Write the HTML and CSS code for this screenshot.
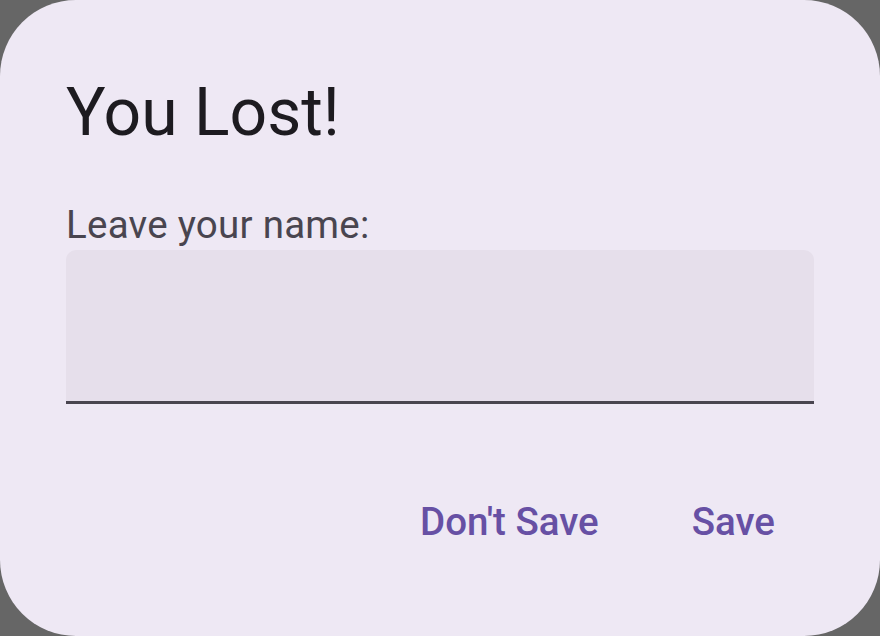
FILE: index.html
```html
<!DOCTYPE html>
<html>
<head>
<meta charset="utf-8">
<link rel="stylesheet" href="styles.css">
</head>
<body>
<div class="dialog">
  <h1 class="title">You Lost!</h1>
  <p class="label">Leave your name:</p>
  <div class="field"></div>
  <div class="actions">
    <button class="btn">Don't Save</button>
    <button class="btn">Save</button>
  </div>
</div>
</body>
</html>
```
FILE: styles.css
```css
html, body {
  margin: 0;
  padding: 0;
  background: #666666;
}
.dialog {
  box-sizing: border-box;
  width: 880px;
  height: 636px;
  background: #EEE8F4;
  border-radius: 76px;
  padding: 69px 66px 0 66px;
  font-family: Roboto, "Liberation Sans", sans-serif;
  display: flex;
  flex-direction: column;
}
.title {
  margin: 0;
  font-size: 66px;
  font-weight: 400;
  line-height: 88px;
  color: #1D1B20;
}
.label {
  margin: 42px 0 0 0;
  font-size: 38.5px;
  line-height: 52px;
  letter-spacing: 0.25px;
  color: #49454F;
}
.field {
  margin-top: -1px;
  height: 151px;
  background: #E6DFEB;
  border-radius: 10px 10px 0 0;
  border-bottom: 3px solid #49454F;
}
.actions {
  margin-top: 62px;
  display: flex;
  justify-content: flex-end;
  gap: 27px;
  padding-right: 6px;
}
.btn {
  font-family: Roboto, "Liberation Sans", sans-serif;
  font-size: 38.5px;
  font-weight: 500;
  letter-spacing: 0;
  color: #6750A4;
  background: transparent;
  border: 0;
  height: 110px;
  padding: 0 33px;
  line-height: 55px;
}
```
